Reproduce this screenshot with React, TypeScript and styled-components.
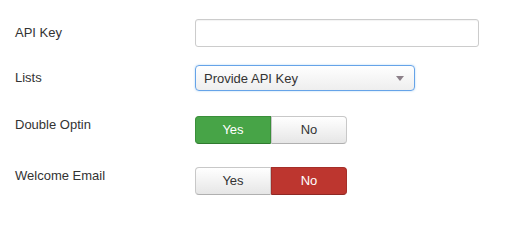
import styled, { createGlobalStyle } from 'styled-components';

const GlobalStyle = createGlobalStyle`
    body {
        margin: 0;
        background: #fff;
        font-family: "Liberation Sans", Arial, sans-serif;
        font-size: 13px;
        color: #333;
    }
`;

const Form = styled.form`
    display: flex;
    flex-direction: column;
    padding: 19px 15px 0 15px;
`;

const ControlGroup = styled.div<{ $gap: number }>`
    display: flex;
    align-items: flex-start;
    margin-bottom: ${(p) => p.$gap}px;
`;

const Label = styled.label<{ $top: number }>`
    width: 180px;
    flex-shrink: 0;
    padding-top: ${(p) => p.$top}px;
    line-height: 18px;
    color: #333;
`;

const TextInput = styled.input`
    box-sizing: border-box;
    width: 284px;
    height: 28px;
    margin: 0;
    padding: 4px 6px;
    border: 1px solid #ccc;
    border-radius: 3px;
    background: #fff;
    font: inherit;
    outline: none;
    box-shadow: inset 0 1px 1px rgba(0, 0, 0, 0.05);
`;

const Select = styled.div`
    box-sizing: border-box;
    display: flex;
    align-items: center;
    justify-content: space-between;
    width: 220px;
    height: 26px;
    padding: 0 10px 0 8px;
    border: 1px solid #66a3e8;
    border-radius: 4px;
    background: linear-gradient(#ffffff, #eeeeee);
    box-shadow: 0 0 2px rgba(82, 168, 236, 0.5);
    color: #333;
`;

const Caret = styled.svg`
    width: 8px;
    height: 5px;
`;

const Toggle = styled.fieldset`
    display: flex;
    margin: 0;
    padding: 0;
    border: 0;
`;

const ToggleButton = styled.button<{ $tone?: 'green' | 'red'; $side: 'left' | 'right' }>`
    box-sizing: border-box;
    width: 76px;
    height: 28px;
    margin: 0;
    padding: 0;
    font-family: "Liberation Sans", Arial, sans-serif;
    font-size: 13px;
    line-height: 18px;
    cursor: pointer;
    border-radius: ${(p) => (p.$side === 'left' ? '4px 0 0 4px' : '0 4px 4px 0')};
    ${(p) =>
		p.$tone === 'green'
			? `
        background: #47a447;
        border: 1px solid #3a8f3a;
        border-bottom-color: #2f7a2f;
        color: #fff;
    `
			: p.$tone === 'red'
			? `
        background: #bd362f;
        border: 1px solid #a52f29;
        border-bottom-color: #8e2824;
        color: #fff;
    `
			: `
        background: linear-gradient(#ffffff, #e6e6e6);
        border: 1px solid #c8c8c8;
        border-bottom-color: #b0b0b0;
        color: #333;
    `}
`;

const YesNo = ({ value }: { value: boolean }) => (
	<Toggle>
		<ToggleButton type="button" $side="left" $tone={value ? 'green' : undefined}>
			Yes
		</ToggleButton>
		<ToggleButton type="button" $side="right" $tone={value ? undefined : 'red'}>
			No
		</ToggleButton>
	</Toggle>
);

const App = () => {
	return (
		<>
			<GlobalStyle />
			<Form>
				<ControlGroup $gap={18}>
					<Label $top={5}>API Key</Label>
					<TextInput type="text" />
				</ControlGroup>
				<ControlGroup $gap={25}>
					<Label $top={4}>Lists</Label>
					<Select>
						<span>Provide API Key</span>
						<Caret viewBox="0 0 8 5">
							<path d="M0 0 L8 0 L4 5 Z" fill="#8c8089" />
						</Caret>
					</Select>
				</ControlGroup>
				<ControlGroup $gap={23}>
					<Label $top={0}>Double Optin</Label>
					<YesNo value={true} />
				</ControlGroup>
				<ControlGroup $gap={0}>
					<Label $top={0}>Welcome Email</Label>
					<YesNo value={false} />
				</ControlGroup>
			</Form>
		</>
	);
};

export default App;
